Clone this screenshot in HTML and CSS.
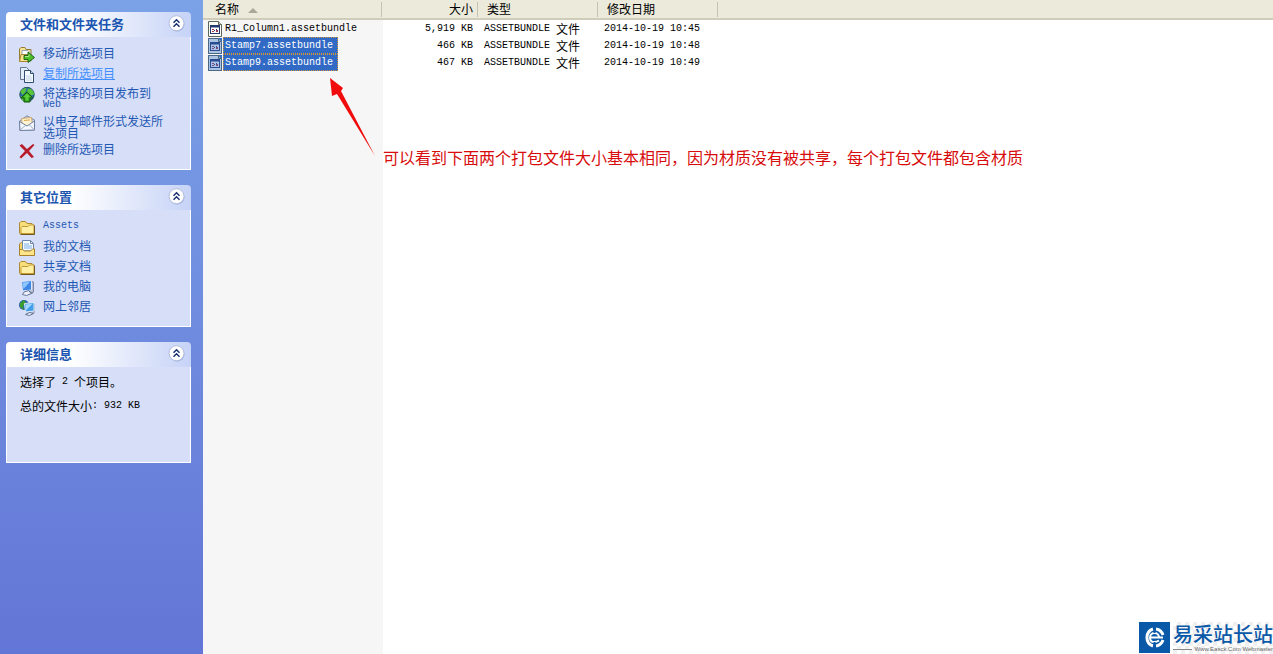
FILE: index.html
```
<!doctype html>
<html lang="zh-CN">
<head>
	<meta charset="utf-8">
	<title>Assets</title>
	<link rel="stylesheet" href="styles.css">
</head>
<body>
	<!-- shared icon shapes -->
	<svg class="defs" aria-hidden="true">
		<symbol id="chevrons" viewBox="0 0 17 17">
			<circle cx="9" cy="9" r="7.5" fill="#7f92c4" opacity=".6"/>
			<circle cx="8.5" cy="8.2" r="7.5" fill="#fff" stroke="#b3bedd"/>
			<path d="M5.5 7.8l3-3 3 3M5.5 11.8l3-3 3 3" fill="none" stroke="#1c3272" stroke-width="1.5"/>
		</symbol>
		<symbol id="folder" viewBox="0 0 16 16">
			<path d="M.5 13V3L2 1.500h4.500l1.500 2h5L14.500 5v9H1.500z" fill="#f8df7c" stroke="#b08a32"/>
			<path d="M2 13.500V7.500L3 6.500h6L10.500 5H15v8.500z" fill="#fff0a3" stroke="#c49a35"/>
			<path d="M1.500 14.500h14V5.500" fill="none" stroke="#74591e"/>
		</symbol>
		<symbol id="file" viewBox="0 0 14 16">
			<path d="M.5.5h10l3 3v12H.5z" fill="#fffff5" stroke="#5c665c"/>
			<path d="M10.500.5v3h3" fill="#ccd3bd" stroke="#5c665c"/>
			<rect x="2.500" y="4.500" width="9" height="8" fill="#fff" stroke="#24396f"/>
			<path d="M2 5.500h10" stroke="#24396f" stroke-width="2"/>
			<path d="M4 8h2v1H4zM4 10h2v1H4zM8 9h2v2H8z" fill="#a43a4d"/>
			<path d="M6 9h1v1H6zM8 8h1v1H8z" fill="#24396f"/>
		</symbol>
	</svg>

	<aside class="tasks">
		<section class="panel">
			<header class="panel-head">
				<h2>文件和文件夹任务</h2>
				<button type="button" class="collapse" aria-label="收起文件和文件夹任务"><svg><use href="#chevrons"/></svg></button>
			</header>
			<ul class="panel-body">
				<li><a href="#">
					<svg class="icon" viewBox="0 0 16 16">
						<path d="M.5 14V2L2 .5h4l1 2h5V14z" fill="#f7e394" stroke="#967b35"/>
						<path d="M3 3.500h6l2 2V11H3z" fill="#fff" stroke="#9aa4ad"/>
						<path d="M.5 14.500L2 7.500h8v7z" fill="#f9e38d" stroke="#a58432"/>
						<path d="M5 8.500h4V5l6.500 5.500-6.500 5v-3H5z" fill="#4cbf2a" stroke="#1c6413"/>
						<path d="M6 9.500h4V7.500" fill="none" stroke="#a7ea85"/>
					</svg>
					<span>移动所选项目</span></a></li>
				<li><a href="#" class="hover">
					<svg class="icon" viewBox="0 0 16 16">
						<path d="M1.500.5h6l3 3v9h-9z" fill="#e3edf9" stroke="#64788f"/>
						<path d="M5.500 3.500h6l3 3v9h-9z" fill="#f7fbff" stroke="#2f4c70"/>
						<path d="M11.500 3.500v3h3" fill="#c9d9ec" stroke="#2f4c70"/>
						<path d="M7 9h5M7 11h6M7 13h6" stroke="#c3d3e7"/>
					</svg>
					<span>复制所选项目</span></a></li>
				<li><a href="#">
					<svg class="icon" viewBox="0 0 16 16">
						<circle cx="8" cy="7.500" r="7.200" fill="#2a69a8" stroke="#235060"/>
						<path d="M1.500 5c1-3 4-4 6-4l-1 4-3 3zM9 1.500c4 0 6 3 6 6l-3 1-4-4zM2 9l4 1-1 4c-2 0-3-3-3-5z" fill="#59c43a"/>
						<path d="M8 5l6 6h-3v4H5v-4H2z" fill="#2f9c1b" stroke="#125a10"/>
						<path d="M8 6.500l3.500 3.500h-2v3.500h-3V10h-2z" fill="#5fcf3c"/>
					</svg>
					<span>将选择的项目发布到 <span class="en">Web</span></span></a></li>
				<li><a href="#">
					<svg class="icon" viewBox="0 0 16 16">
						<path d="M.5 6L8 .8 15.500 5v10L1 15.500z" fill="#c5d3ea" stroke="#7888a4"/>
						<path d="M2.500 3.500l10-1 1 8-10 1z" fill="#fff4d0" stroke="#d3a969"/>
						<path d="M5 5.500l6-.6" stroke="#dda24e"/>
						<path d="M.5 6.500l7.500 4.500 7.500-5V15L1 15.500z" fill="#f5f8fe" stroke="#6f80a0"/>
						<path d="M1 15l6-5M15 14.500l-5-5" stroke="#9dabc3"/>
					</svg>
					<span>以电子邮件形式发送所选项目</span></a></li>
				<li><a href="#">
					<svg class="icon" viewBox="0 0 16 16">
						<path d="M.5 2.500L3 1l5 5 6-5 1.500 1-5.500 6 5 6-2.500 1L8 10l-6 5.500L.5 14 6 8z" fill="#b81c2c"/>
					</svg>
					<span>删除所选项目</span></a></li>
			</ul>
		</section>

		<section class="panel">
			<header class="panel-head">
				<h2>其它位置</h2>
				<button type="button" class="collapse" aria-label="收起其它位置"><svg><use href="#chevrons"/></svg></button>
			</header>
			<ul class="panel-body">
				<li><a href="#"><svg class="icon"><use href="#folder"/></svg><span class="en">Assets</span></a></li>
				<li><a href="#">
					<svg class="icon" viewBox="0 0 16 16">
						<path d="M.5 14V4L2.500 2.500H6V14z" fill="#f6d566" stroke="#a9812a"/>
						<path d="M3.500.5h8l3 3V11h-11z" fill="#f6faff" stroke="#6d87aa"/>
						<path d="M11.500.5v3h3" fill="none" stroke="#6d87aa"/>
						<path d="M5 4h5M5 6h8M5 8h8" stroke="#7bb2e6"/>
						<path d="M.5 15.500V9.500h3l2 1.500h6l2-2h2v6.500z" fill="#ffe58a" stroke="#a9812a"/>
					</svg>
					<span>我的文档</span></a></li>
				<li><a href="#"><svg class="icon"><use href="#folder"/></svg><span>共享文档</span></a></li>
				<li><a href="#">
					<svg class="icon" viewBox="0 0 16 16">
						<path d="M11 1l3.500 1v10l-3.500 2z" fill="#b5bdd0" stroke="#7a86a1"/>
						<path d="M2.500 1.500l10-1v9.500l-9 1z" fill="#3f87e6" stroke="#dce8fa"/>
						<path d="M3.500 2.500l7.500-.8L4.500 9z" fill="#8cc6ff"/>
						<path d="M5 12l5-1.500 1 2 2.500.5-6 2.500-4-1z" fill="#edf1f9" stroke="#69779a"/>
					</svg>
					<span>我的电脑</span></a></li>
				<li><a href="#">
					<svg class="icon" viewBox="0 0 16 16">
						<circle cx="5" cy="5" r="5" fill="#245fa8"/>
						<path d="M1 3l4-3 2 3-3 3 1 4-4-3z" fill="#3a9d2d"/>
						<path d="M14 3l2 1v9l-3 1z" fill="#aab3c8"/>
						<path d="M5.500 3.500l9.500-1v8.500l-8.500 1z" fill="#459fe9" stroke="#dce8fa"/>
						<path d="M6.500 4.500l7-.8-6.500 6.500z" fill="#a3d9ff"/>
						<path d="M8 13.500l3-1 3.500 1-4 2-4-1z" fill="#edf1f9" stroke="#5f6d8e"/>
					</svg>
					<span>网上邻居</span></a></li>
			</ul>
		</section>

		<section class="panel">
			<header class="panel-head">
				<h2>详细信息</h2>
				<button type="button" class="collapse" aria-label="收起详细信息"><svg><use href="#chevrons"/></svg></button>
			</header>
			<div class="panel-body details">
				<p>选择了<span class="en"> 2 </span>个项目。</p>
				<p>总的文件大小<span class="en">: 932 KB</span></p>
			</div>
		</section>
	</aside>

	<main class="files">
		<table>
			<colgroup>
				<col class="col-name">
				<col class="col-size">
				<col class="col-type">
				<col class="col-date">
				<col>
			</colgroup>
			<thead>
				<tr>
					<th class="name"><button type="button">名称<i class="sort"></i></button></th>
					<th class="size"><button type="button">大小</button></th>
					<th><button type="button">类型</button></th>
					<th><button type="button">修改日期</button></th>
					<th></th>
				</tr>
			</thead>
			<tbody>
				<tr>
					<td class="name"><div><svg class="file"><use href="#file"/></svg><span class="en label">R1_Column1.assetbundle</span></div></td>
					<td class="size en">5,919 KB</td>
					<td><span class="en">ASSETBUNDLE </span>文件</td>
					<td class="en">2014-10-19 10:45</td>
					<td></td>
				</tr>
				<tr class="selected">
					<td class="name"><div><svg class="file"><use href="#file"/></svg><span class="en label">Stamp7.assetbundle</span></div></td>
					<td class="size en">466 KB</td>
					<td><span class="en">ASSETBUNDLE </span>文件</td>
					<td class="en">2014-10-19 10:48</td>
					<td></td>
				</tr>
				<tr class="selected">
					<td class="name"><div><svg class="file"><use href="#file"/></svg><span class="en label">Stamp9.assetbundle</span></div></td>
					<td class="size en">467 KB</td>
					<td><span class="en">ASSETBUNDLE </span>文件</td>
					<td class="en">2014-10-19 10:49</td>
					<td></td>
				</tr>
			</tbody>
		</table>

		<div class="note">
			<svg class="arrow" viewBox="0 0 48 80"><path d="M2 1l13 10-2 3 34 65L9 17l-5 2z" fill="#f00c0c"/></svg>
			<p>可以看到下面两个打包文件大小基本相同，因为材质没有被共享，每个打包文件都包含材质</p>
		</div>

		<div class="watermark">
			<svg class="logo" viewBox="0 0 31 31">
				<rect width="31" height="31" fill="#0a59a8"/>
				<path d="M14 7a9 9 0 0 0 0 17M17 7a9 9 0 0 1 7 6M24 18a9 9 0 0 1-7 6" fill="none" stroke="#fff" stroke-width="3"/>
				<path d="M11 15.500h13M20 15.500c0-6-9-6-9 0s6 5 9 3" fill="none" stroke="#fff" stroke-width="2"/>
				<path d="M15.500 4v7M15.500 20v7" stroke="#0a59a8" stroke-width="2"/>
			</svg>
			<div class="brand">
				<strong>易采站长站</strong>
				<small>Www.Easck.Com Webmaster</small>
			</div>
		</div>
	</main>
</body>
</html>
```
FILE: styles.css
```
* {
	box-sizing: border-box;
}
body {
	margin: 0;
	min-height: 100vh;
	display: flex;
	font: 12px/12px "Noto Sans CJK SC", sans-serif;
	color: #000;
	background: #fff;
}
h2, p, ul {
	margin: 0;
	padding: 0;
}
button {
	font: inherit;
	color: inherit;
	padding: 0;
	border: 0;
	background: none;
}
.defs {
	position: absolute;
	width: 0;
	height: 0;
}
/* half-width latin next to 12px chinese */
.en {
	font-family: "Liberation Mono", monospace;
	font-size: 10px;
	white-space: pre;
}
span.en {
	vertical-align: top;
}

/* task pane */
.tasks {
	flex: none;
	width: 203px;
	padding: 12px 12px 12px 6px;
	display: flex;
	flex-direction: column;
	gap: 15px;
	background: linear-gradient(#7ba2e7, #6375d6);
}
.panel-head {
	height: 25px;
	padding: 0 6px 2px 14px;
	display: flex;
	align-items: center;
	justify-content: space-between;
	border-radius: 4px 4px 0 0;
	background: linear-gradient(to right, #fff 35%, #c6d3f7);
}
.panel-head h2 {
	font-size: 13px;
	line-height: 23px;
	font-weight: bold;
	color: #1b55b0;
}
.collapse {
	width: 17px;
	height: 17px;
}
.collapse svg {
	display: block;
	width: 17px;
	height: 17px;
}
.panel-body {
	padding: 10px 22px 10px 12px;
	display: flex;
	flex-direction: column;
	gap: 4px;
	list-style: none;
	border: 1px solid #fff;
	border-top: 0;
	background: #d6dff7;
}
.panel-body a {
	display: flex;
	align-items: flex-start;
	gap: 8px;
	min-height: 16px;
	color: #1f58b4;
	text-decoration: none;
}
.panel-body a.hover {
	color: #428eff;
	text-decoration: underline;
}
.icon {
	flex: none;
	width: 16px;
	height: 16px;
}
.details {
	min-height: 96px;
	padding-top: 9px;
	padding-left: 13px;
	gap: 12px;
}

/* file list */
.files {
	flex: 1;
	position: relative;
	background: linear-gradient(to right, #f6f6f6 180px, #fff 180px);
}
table {
	width: 100%;
	table-layout: fixed;
	border-collapse: separate;
	border-spacing: 0;
}
.col-name {
	width: 179px;
}
.col-size {
	width: 96px;
}
.col-type, .col-date {
	width: 120px;
}
th {
	height: 20px;
	padding: 0 0 0 9px;
	text-align: left;
	font-weight: normal;
	background: linear-gradient(to left, #c5c2b2 1px, transparent 1px) right 2px / 1px 15px no-repeat, #ebeadb;
	border-bottom: 2px solid #d0ccba;
}
th:last-child {
	background: #ebeadb;
}
th.name {
	padding-left: 12px;
}
th.size, td.size {
	text-align: right;
	padding-right: 5px;
}
.sort {
	display: inline-block;
	margin-left: 9px;
	vertical-align: middle;
	border: 5px solid transparent;
	border-top: 0;
	border-bottom-color: #aca899;
}
td {
	height: 17px;
	padding: 0 0 0 6px;
	white-space: nowrap;
}
td.name {
	padding-left: 5px;
}
td.name div {
	display: flex;
	align-items: center;
}
.file {
	width: 14px;
	height: 16px;
}
.label {
	margin-left: 1px;
	padding: 0 5px 0 2px;
	line-height: 17px;
}
.selected .label {
	color: #fff;
	background: #316ac5;
	outline: 1px dotted #ce953a;
	outline-offset: -1px;
}
.selected .file {
	background: #316ac5;
}
.selected .file use {
	opacity: .6;
}

/* red callout over the list */
.note {
	position: absolute;
	left: 125px;
	top: 77px;
	display: flex;
	align-items: flex-end;
	gap: 7px;
	color: #d80c0c;
	font-size: 16px;
	line-height: 16px;
	white-space: nowrap;
}
.note p {
	margin-bottom: -8px;
}
.arrow {
	width: 48px;
	height: 80px;
}

.watermark {
	position: absolute;
	right: 0;
	bottom: 0;
	display: flex;
	gap: 3px;
	height: 32px;
	color: #0a59a8;
}
.logo {
	width: 31px;
	height: 31px;
}
.brand {
	display: flex;
	flex-direction: column;
	background: repeating-conic-gradient(#f0f0f0 0 25%, #fff 0 50%) 0 0 / 8px 8px;
}
.brand strong {
	font-size: 20px;
	line-height: 24px;
	font-weight: 500;
}
.brand small {
	display: flex;
	align-items: center;
	gap: 2px;
	font: 6px/6px "Liberation Sans", sans-serif;
	color: #666;
	white-space: nowrap;
}
.brand small::before {
	content: "";
	flex: 1;
	height: 1px;
	background: #888;
}
```
